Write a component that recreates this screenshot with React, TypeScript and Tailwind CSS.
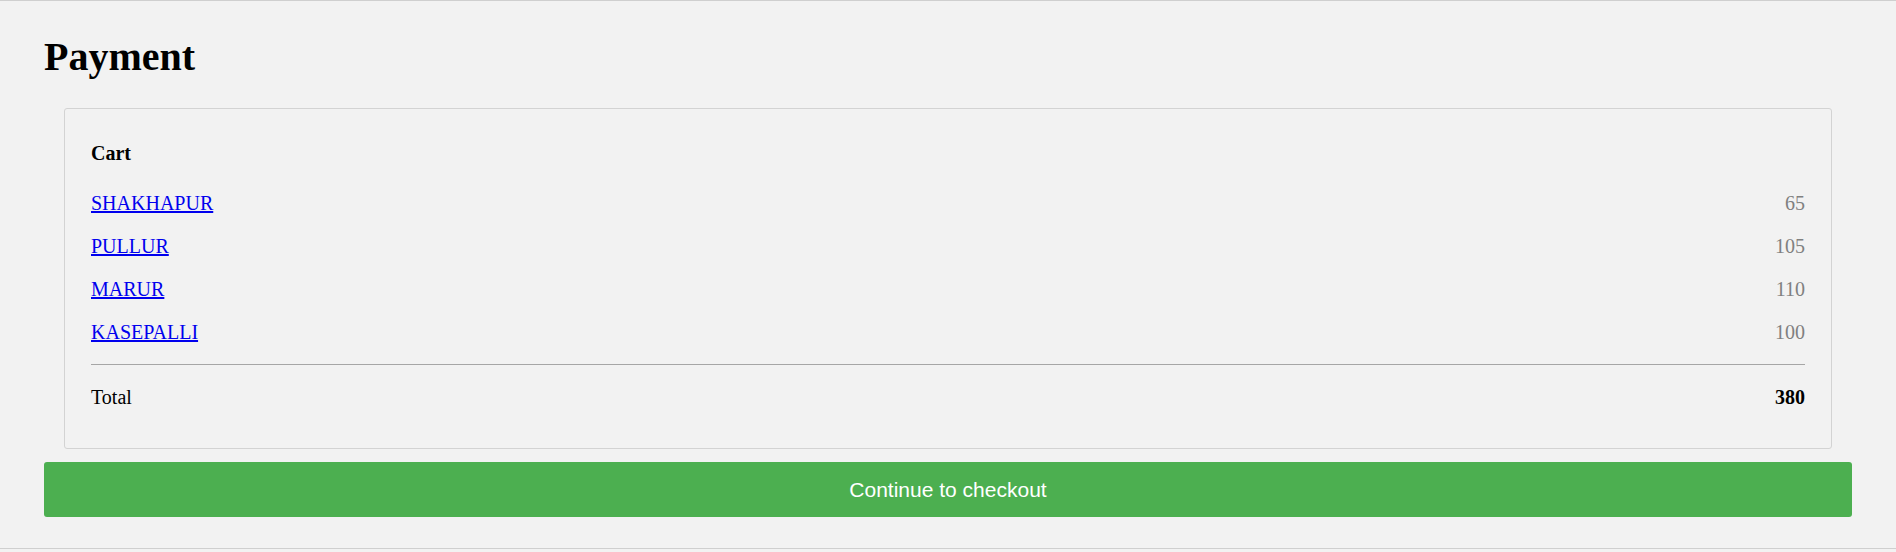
import React from 'react';

interface CartItem {
  name: string;
  price: number;
}

const items: CartItem[] = [
  { name: 'SHAKHAPUR', price: 65 },
  { name: 'PULLUR', price: 105 },
  { name: 'MARUR', price: 110 },
  { name: 'KASEPALLI', price: 100 },
];

export default function App() {
  const total = items.reduce((sum, item) => sum + item.price, 0);

  return (
    <div className="min-h-screen bg-[#f2f2f2] font-['Liberation_Serif',serif] text-black">
      <div className="h-[549px] border-y border-[#cfcfcf] px-[44px] pt-[32px]">
        <h1 className="text-[40px] leading-[47px] font-bold">Payment</h1>

        {/* Cart summary */}
        <div className="mx-[20px] mt-[28px] rounded-[3px] border border-[#d3d3d3] px-[26px] pt-[33px] pb-[39px]">
          <h4 className="text-[20px] leading-[23px] font-bold">Cart</h4>
          <div className="mt-[27px] flex flex-col gap-[20px]">
            {items.map((item) => (
              <div key={item.name} className="flex justify-between text-[20px] leading-[23px]">
                <a href="#" className="text-[#0000ee] underline">
                  {item.name}
                </a>
                <span className="text-[#808080]">{item.price}</span>
              </div>
            ))}
          </div>
          <div className="mt-[20px] h-px bg-[#a6a6a6]" />
          <div className="mt-[21px] flex justify-between text-[20px] leading-[23px]">
            <span>Total</span>
            <span className="font-bold">{total}</span>
          </div>
        </div>

        <button className="mt-[13px] flex h-[55px] w-full items-center justify-center rounded-[3px] bg-[#4caf50] font-['Liberation_Sans',Arial,sans-serif] text-[21px] text-white">
          Continue to checkout
        </button>
      </div>
    </div>
  );
}
